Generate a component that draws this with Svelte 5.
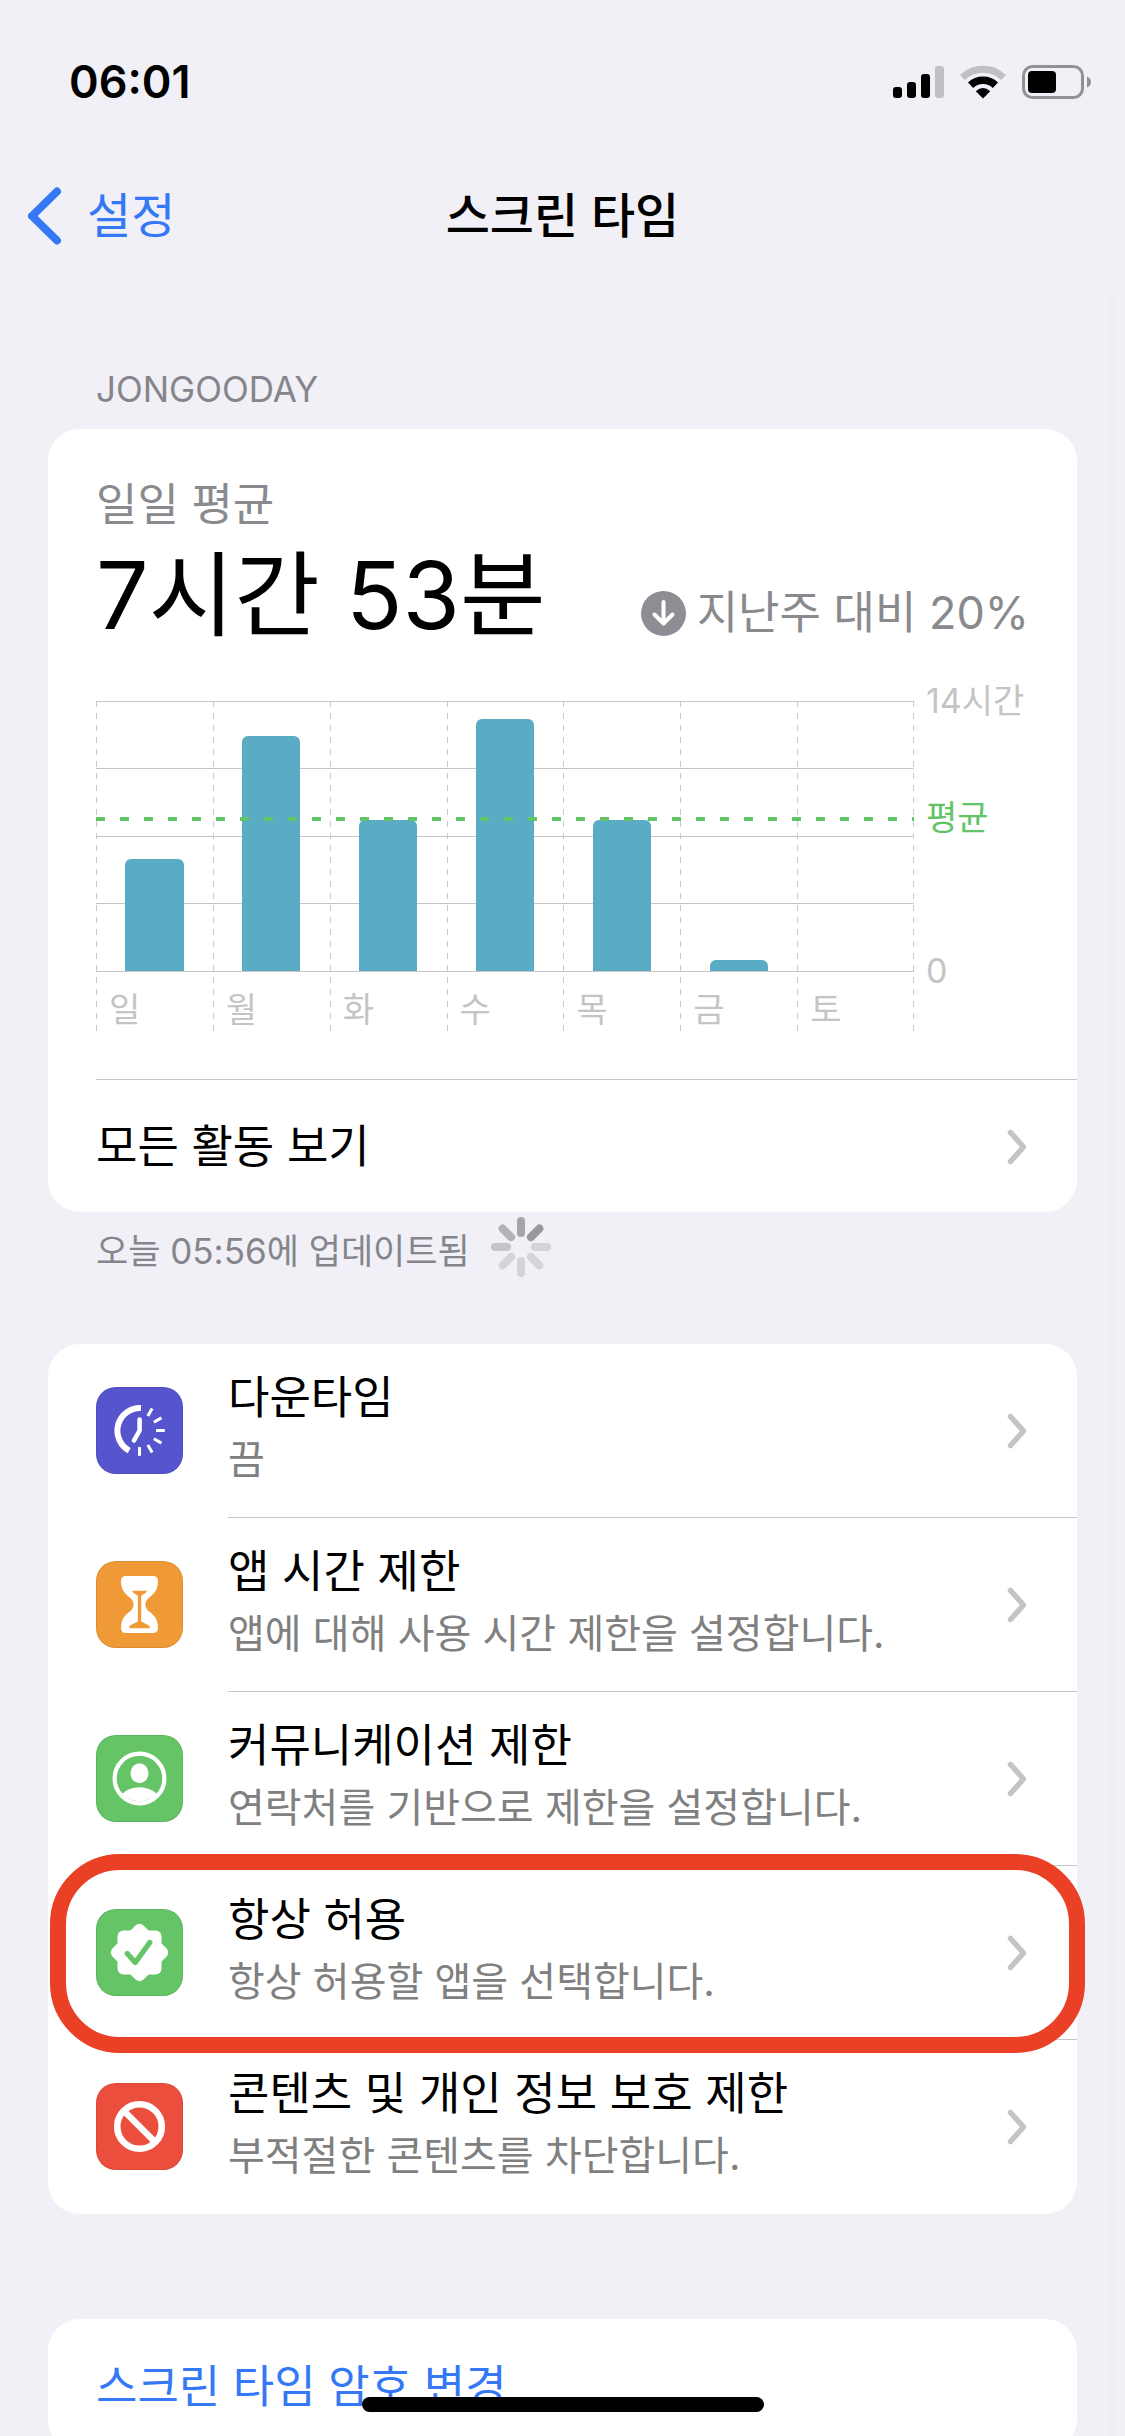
<script lang="ts">
	interface Day {
		name: string,
		hours: number,
	}

	interface Item {
		id: string,
		title: string,
		detail: string,
		color: string,
		marked?: boolean
	}

	const MAX_HOURS = 14
	const average = 7.9

	const days: Day[] = [
		{ name: "일", hours: 5.8 },
		{ name: "월", hours: 12.2 },
		{ name: "화", hours: 7.85 },
		{ name: "수", hours: 13.05 },
		{ name: "목", hours: 7.85 },
		{ name: "금", hours: 0.57 },
		{ name: "토", hours: 0 },
	]

	const items: Item[] = [
		{ id: "downtime", title: "다운타임", detail: "끔", color: "indigo" },
		{ id: "limits", title: "앱 시간 제한", detail: "앱에 대해 사용 시간 제한을 설정합니다.", color: "orange" },
		{ id: "communication", title: "커뮤니케이션 제한", detail: "연락처를 기반으로 제한을 설정합니다.", color: "green" },
		{ id: "allowed", title: "항상 허용", detail: "항상 허용할 앱을 선택합니다.", color: "green", marked: true },
		{ id: "privacy", title: "콘텐츠 및 개인 정보 보호 제한", detail: "부적절한 콘텐츠를 차단합니다.", color: "red" },
	]

	const ticks = [30, 60, 90, 120, 150, 180]
	// clockwise from the top
	const spokes = ["#a5a4a9", "#98979c", "#d4d3d8", "#d4d3d8", "#d4d3d8", "#d4d3d8", "#c5c4c9", "#b3b2b7"]

	const percent = (hours: number) => (hours / MAX_HOURS) * 100
</script>

{#snippet chevron()}
	<svg class="chevron" width="22" height="38" viewBox="0 0 22 38" aria-hidden="true">
		<path d="M3.500 4.500L16.500 19L3.500 33.500" />
	</svg>
{/snippet}

{#snippet icon(id: string)}
	<svg viewBox="0 0 87 87" aria-hidden="true">
		{#if id === "downtime"}
			<path class="line" stroke-width="6" d="M45 21A22.700 22.700 0 0 0 33.200 63.600" />
			<path class="line round" stroke-width="4.600" d="M43.600 32.500V43.500L38 53.500" />
			{#each ticks as angle}
				<path class="line" stroke-width="3" d="M43.500 26.900V18.200" transform="rotate({angle} 43.5 43.5)" />
			{/each}
		{:else if id === "limits"}
			<path fill="#fff" d="M30 15H57Q62 15 62 20C62 30 57 33.500 52 37.500C48.600 41 48.600 46 52 49.500C57 53.500 62 57 62 67Q62 72 57 72H30Q25 72 25 67C25 57 30 53.500 35 49.500C38.400 46 38.400 41 35 37.500C30 33.500 25 30 25 20Q25 15 30 15Z" />
			<path fill="#ef9a37" d="M36 29.800H51.300Q50.500 31.800 46.500 33.800Q45.200 34.500 45.200 36V60.500L53 64.500Q54.500 66 53.500 67.300H33.500Q32.500 66 34 64.500L41.900 60.500V36Q41.900 34.500 40.600 33.800Q36.700 31.800 36 29.800Z" />
		{:else if id === "communication"}
			<circle class="line" stroke-width="4.200" cx="43.500" cy="43.500" r="24.900" />
			<ellipse fill="#fff" cx="43.500" cy="38.200" rx="9" ry="10" />
			<path fill="#fff" d="M26 59Q33 52.300 43.500 52.300T61 59A24.900 24.900 0 0 1 26 59Z" />
		{:else if id === "allowed"}
			<rect fill="#fff" x="21.500" y="21.500" width="44" height="44" rx="6" />
			<rect fill="#fff" x="21.500" y="21.500" width="44" height="44" rx="6" transform="rotate(45 43.5 43.5)" />
			<path class="check" d="M31.300 44.500L39.300 53.500L53.800 33.500" />
		{:else}
			<circle class="line" stroke-width="6.600" cx="43.500" cy="43.500" r="22.300" />
			<path class="line" stroke-width="6.400" d="M28 28L59 59" />
		{/if}
	</svg>
{/snippet}

<div class="screen">
	<div class="status">
		<span class="clock">06:01</span>
		<div class="indicators">
			<svg width="51" height="34" viewBox="0 0 51 34" aria-hidden="true">
				<rect x="0" y="22" width="9" height="11" rx="3" />
				<rect x="14" y="17" width="9" height="16" rx="3" />
				<rect x="28" y="9" width="9" height="24" rx="3" />
				<rect x="42" y="1" width="9" height="32" rx="3" fill="#c0bfc4" />
			</svg>
			<svg width="46" height="34" viewBox="0 0 46 34" aria-hidden="true">
				<g fill="none" stroke-width="7">
					<path stroke="#c0bfc4" d="M2.500 12.500A29.500 29.500 0 0 1 43.500 12.500" />
					<path stroke="#000" stroke-width="7.500" d="M10.600 20.200A18 18 0 0 1 35.400 20.200" />
				</g>
				<path d="M23 33.500L15.800 26.300Q23 19.500 30.200 26.300Z" />
			</svg>
			<svg width="69" height="34" viewBox="0 0 69 34" aria-hidden="true">
				<rect x="1.500" y="1.500" width="59" height="31" rx="9" fill="none" stroke="#929196" stroke-width="3" />
				<rect x="6" y="6" width="28" height="22" rx="4" />
				<path d="M65 11.500Q69 13 69 17T65 22.500Z" fill="#929196" />
			</svg>
		</div>
	</div>

	<header>
		<a class="back" href="#settings">
			<svg width="34" height="58" viewBox="0 0 34 58" aria-hidden="true">
				<path d="M29 4.500L4 29L29 53.500" />
			</svg>
			설정
		</a>
		<h1>스크린 타임</h1>
	</header>

	<main>
		<h2>JONGOODAY</h2>
		<section class="card">
			<div class="summary">
				<p class="label">일일 평균</p>
				<div class="total">
					<strong>7시간 53분</strong>
					<span class="trend">
						<svg width="45" height="45" viewBox="0 0 45 45" aria-hidden="true">
							<circle cx="22.500" cy="22.500" r="22.500" fill="#8e8d93" />
							<path d="M22.500 11V32M13.500 23.500L22.500 32.500L31.500 23.500" />
						</svg>
						지난주 대비 20%
					</span>
				</div>

				<div class="chart">
					<div class="plot">
						<svg class="grid" aria-hidden="true">
							{#each [0, 67, 135, 202, 270] as y}
								<line x1="0" x2="100%" y1={y + 0.5} y2={y + 0.5} />
							{/each}
						</svg>
						{#each days as day}
							<div class="day">
								<div class="track">
									<div class="bar" style="height:{percent(day.hours)}%"></div>
								</div>
								<span>{day.name}</span>
							</div>
						{/each}
						<svg class="average" style="bottom:{60 + percent(average) * 2.7 - 2}px" aria-hidden="true">
							<line x1="0" x2="100%" y1="2" y2="2" />
						</svg>
					</div>
					<div class="axis">
						<span>14시간</span>
						<span class="mean">평균</span>
						<span>0</span>
					</div>
				</div>
			</div>
			<a class="all" href="#activity">모든 활동 보기 {@render chevron()}</a>
		</section>

		<p class="updated">
			<span>오늘 05:56에 업데이트됨</span>
			<svg width="60" height="60" viewBox="0 0 60 60" aria-hidden="true">
				{#each spokes as color, i}
					<path stroke={color} d="M30 4V16" transform="rotate({i * 45} 30 30)" />
				{/each}
			</svg>
		</p>

		<nav class="card">
			{#each items as item}
				<a class="row" class:marked={item.marked} href="#{item.id}">
					<span class="tile {item.color}">{@render icon(item.id)}</span>
					<span class="body">
						<span class="text">
							<span class="title">{item.title}</span>
							<span class="detail">{item.detail}</span>
						</span>
						{@render chevron()}
					</span>
				</a>
			{/each}
		</nav>

		<section class="card passcode">
			<button type="button">스크린 타임 암호 변경</button>
		</section>
	</main>

	<div class="scrollbar"></div>
	<div class="home"></div>
</div>


<style>
	:global(body) {
		background: #f1f0f6;
	}

	.screen {
		position: relative;
		height: 100vh;
		overflow: hidden;
		background: #f1f0f6;
		color: #000;
		font-family: Inter, "Noto Sans CJK KR", sans-serif;
		font-size: 45px;
		line-height: 56px;
	}
	svg {
		display: block;
		flex: none;
	}
	a {
		color: inherit;
		text-decoration: none;
	}
	h1, h2, p {
		margin: 0;
	}

	.status {
		display: flex;
		align-items: center;
		justify-content: space-between;
		height: 100px;
		padding: 32px 34px 0 69px;
	}
	.clock {
		font-size: 45px;
		font-weight: 600;
	}
	.indicators {
		display: flex;
		gap: 16px;
	}

	header {
		display: grid;
		grid-template-columns: 1fr auto 1fr;
		align-items: center;
		height: 166px;
		padding: 2px 28px 0;
		box-sizing: border-box;
	}
	.back {
		display: flex;
		align-items: center;
		gap: 25px;
		color: #3478f6;
		font-size: 48px;
	}
	.back path {
		fill: none;
		stroke: #3478f6;
		stroke-width: 8;
		stroke-linecap: round;
		stroke-linejoin: round;
	}
	h1 {
		font-size: 48px;
		font-weight: 500;
	}

	main {
		padding: 69px 48px 0;
	}
	h2 {
		padding: 0 48px 18px;
		color: #85858b;
		font-size: 35px;
		font-weight: 400;
		line-height: 44px;
	}
	.card {
		border-radius: 32px;
		background: #fff;
	}

	.summary {
		padding: 48px 48px;
		color: #8a8a8e;
	}
	.total {
		display: flex;
		align-items: flex-end;
		justify-content: space-between;
		margin-top: 16px;
	}
	.total strong {
		color: #000;
		font-size: 93px;
		font-weight: 400;
		line-height: 92px;
		white-space: nowrap;
	}
	.trend {
		display: flex;
		align-items: center;
		gap: 11px;
		white-space: nowrap;
	}
	.trend path {
		fill: none;
		stroke: #fff;
		stroke-width: 4;
		stroke-linecap: round;
		stroke-linejoin: round;
	}

	.chart {
		display: grid;
		grid-template-columns: 1fr 115px;
		height: 330px;
		margin-top: 60px;
		color: #c4c4c6;
		font-size: 34px;
		line-height: 40px;
	}
	.plot {
		position: relative;
		display: grid;
		grid-template-columns: repeat(7, 1fr);
		background: repeating-linear-gradient(#c9c9ce 0 6px, transparent 6px 12px) right / 1px 100% no-repeat;
	}
	.grid, .average {
		position: absolute;
		left: 0;
		width: 100%;
	}
	.grid {
		top: 0;
		height: 271px;
	}
	.grid line {
		stroke: #c6c6ca;
	}
	.average {
		height: 4px;
	}
	.average line {
		stroke: #62c466;
		stroke-width: 4;
		stroke-dasharray: 9 15;
	}
	.day {
		background: repeating-linear-gradient(#c9c9ce 0 6px, transparent 6px 12px) left / 1px 100% no-repeat;
	}
	.day span {
		display: block;
		padding: 19px 0 0 13px;
	}
	.track {
		position: relative;
		display: flex;
		align-items: flex-end;
		justify-content: center;
		height: 270px;
	}
	.bar {
		width: 50%;
		border-radius: 6px 6px 0 0;
		background: #5aacc5;
	}
	.axis {
		display: flex;
		flex-direction: column;
		justify-content: space-between;
		height: 310px;
		margin-top: -20px;
		padding-left: 12px;
		white-space: nowrap;
	}
	.axis .mean {
		margin-top: -36px;
		color: #62c466;
	}

	.all {
		box-sizing: border-box;
		display: flex;
		align-items: center;
		justify-content: space-between;
		height: 133px;
		margin-left: 48px;
		padding: 2px 48px 0 0;
		border-top: 1px solid #c6c6c8;
	}
	.chevron path {
		fill: none;
		stroke: #c4c4c6;
		stroke-width: 5.5;
		stroke-linecap: round;
		stroke-linejoin: round;
	}

	.updated {
		display: flex;
		align-items: center;
		gap: 21px;
		height: 70px;
		padding: 0 48px;
		margin-bottom: 62px;
		color: #85858b;
		font-size: 35px;
	}
	.updated span {
		padding-top: 8px;
	}
	.updated path {
		stroke-width: 8;
		stroke-linecap: round;
	}

	.row {
		position: relative;
		display: flex;
		align-items: center;
		gap: 45px;
		height: 174px;
		padding-left: 48px;
	}
	.tile {
		flex: none;
		width: 87px;
		height: 87px;
		margin-bottom: 1px;
		border-radius: 20px;
		box-shadow: inset 0 0 0 1px rgba(0, 0, 0, 0.08);
	}
	.indigo {
		background: #5755ce;
	}
	.orange {
		background: #ef9a37;
	}
	.green {
		background: #65c466;
	}
	.red {
		background: #eb4e3d;
	}
	.line {
		fill: none;
		stroke: #fff;
	}
	.round {
		stroke-linecap: round;
		stroke-linejoin: round;
	}
	.check {
		fill: none;
		stroke: #65c466;
		stroke-width: 5.3;
		stroke-linecap: round;
		stroke-linejoin: round;
	}
	.body {
		box-sizing: border-box;
		display: flex;
		flex: 1;
		align-items: center;
		justify-content: space-between;
		height: 100%;
		padding-right: 48px;
		border-bottom: 1px solid #c6c6c8;
	}
	.row:last-child .body {
		border-bottom: 0;
	}
	.text {
		display: flex;
		flex-direction: column;
		gap: 6px;
		padding-bottom: 4px;
	}
	.detail {
		color: #808080;
		font-size: 40px;
	}
	.marked::after {
		content: "";
		position: absolute;
		z-index: 1;
		top: -12px;
		right: -8px;
		bottom: -13px;
		left: 2px;
		border: 16px solid #ea4025;
		border-radius: 70px;
	}

	.passcode {
		margin-top: 105px;
	}
	.passcode button {
		display: block;
		width: 100%;
		height: 132px;
		padding: 4px 48px 0;
		border: 0;
		background: none;
		color: #3478f6;
		font: inherit;
		text-align: left;
	}

	.scrollbar {
		position: absolute;
		top: 292px;
		right: 9px;
		bottom: 0;
		width: 9px;
		border-radius: 4px 4px 0 0;
		background: #efeef3;
	}
	.home {
		position: absolute;
		bottom: 24px;
		left: 50%;
		width: 402px;
		height: 15px;
		border-radius: 8px;
		background: #000;
		transform: translateX(-50%);
	}
</style>
